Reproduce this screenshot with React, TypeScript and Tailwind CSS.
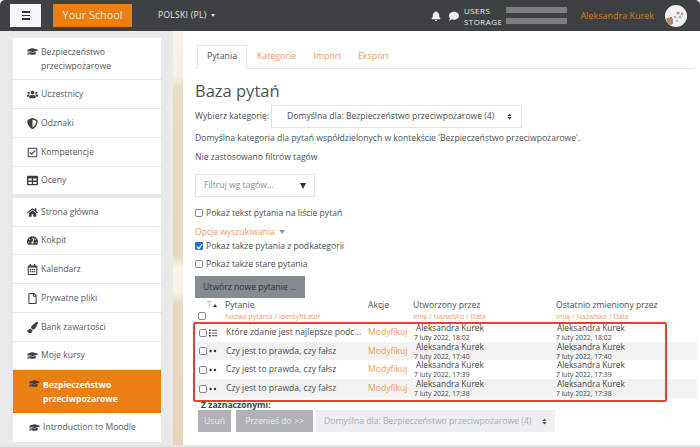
import { FaBell, FaComment, FaUsers, FaShieldAlt, FaRegCheckSquare, FaTable, FaHome, FaTachometerAlt, FaRegCalendarAlt, FaRegFile, FaPaintBrush, FaGraduationCap, FaSort } from 'react-icons/fa';
import type { ReactNode } from 'react';

type Item = { label: ReactNode; icon: ReactNode; h: string };
const ic = 'w-[11px] h-[11px] text-[#3a3f42] shrink-0';

const top: Item[] = [
  { label: <>Bezpieczeństwo<br />przeciwpożarowe</>, icon: <FaGraduationCap className={ic} />, h: 'h-[42px]' },
  { label: 'Uczestnicy', icon: <FaUsers className={ic} />, h: 'h-[29px]' },
  { label: 'Odznaki', icon: <FaShieldAlt className={ic} />, h: 'h-[29px]' },
  { label: 'Kompetencje', icon: <FaRegCheckSquare className={ic} />, h: 'h-[29px]' },
  { label: 'Oceny', icon: <FaTable className={ic} />, h: 'h-[28px]' },
];

const bottom: Item[] = [
  { label: 'Strona główna', icon: <FaHome className={ic} />, h: 'h-[29px]' },
  { label: 'Kokpit', icon: <FaTachometerAlt className={ic} />, h: 'h-[28px]' },
  { label: 'Kalendarz', icon: <FaRegCalendarAlt className={ic} />, h: 'h-[29px]' },
  { label: 'Prywatne pliki', icon: <FaRegFile className={ic} />, h: 'h-[29px]' },
  { label: 'Bank zawartości', icon: <FaPaintBrush className={ic} />, h: 'h-[29px]' },
  { label: 'Moje kursy', icon: <FaGraduationCap className={ic} />, h: 'h-[28px]' },
];

const rows = [
  { name: 'Które zdanie jest najlepsze podc...', multi: true, date: '7 luty 2022, 18:02', bg: '', h: 'h-[19px]' },
  { name: 'Czy jest to prawda, czy fałsz', multi: false, date: '7 luty 2022, 17:40', bg: 'bg-[#f2f2f2]', h: 'h-[18px]' },
  { name: 'Czy jest to prawda, czy fałsz', multi: false, date: '7 luty 2022, 17:39', bg: '', h: 'h-[19px]' },
  { name: 'Czy jest to prawda, czy fałsz', multi: false, date: '7 luty 2022, 17:38', bg: 'bg-[#f2f2f2]', h: 'h-[19px]' },
];

function NavRow({ item }: { item: Item }) {
  return (
    <div className={`${item.h} flex items-center gap-[3px] pl-[13px] border-b border-[#e8e8e8] text-[#555b60]`}>
      {typeof item.label === 'string' ? (
        <>
          <span className="w-[12px] flex justify-center">{item.icon}</span>
          <span>{item.label}</span>
        </>
      ) : (
        <>
          <span className="w-[12px] flex justify-center self-start mt-[8px]">{item.icon}</span>
          <span className="leading-[14px]">{item.label}</span>
        </>
      )}
    </div>
  );
}

const Box = () => <span className="w-[8px] h-[8px] border border-[#8a8a8a] rounded-[2px] bg-white shrink-0" />;

function TypeIcon({ multi }: { multi: boolean }) {
  if (multi) {
    return (
      <svg viewBox="0 0 10 10" className="w-[8px] h-[8px] fill-[#333]">
        <rect x="0" y="0.5" width="2" height="2" />
        <rect x="0" y="4" width="2" height="2" />
        <rect x="0" y="7.5" width="2" height="2" />
        <rect x="3.5" y="1" width="6.5" height="1" />
        <rect x="3.5" y="4.5" width="6.5" height="1" />
        <rect x="3.5" y="8" width="6.5" height="1" />
      </svg>
    );
  }
  return (
    <svg viewBox="0 0 10 10" className="w-[8px] h-[8px] fill-[#333]">
      <circle cx="2" cy="5" r="1.5" />
      <circle cx="7.5" cy="5" r="1.5" />
    </svg>
  );
}

function Avatar() {
  return (
    <svg viewBox="0 0 22 22" className="ml-[11px] mr-[13px] w-[22px] h-[22px]">
      <circle cx="11" cy="11" r="11" fill="#f4f2f0" />
      <path d="M1 14c2-2 5-2 7 0v5l-3 1c-2-1-3-3-4-6z" fill="#b98a68" />
      <circle cx="13" cy="8" r="1.6" fill="#9a9a9a" />
      <circle cx="17" cy="9" r="1.4" fill="#a8a8a8" />
      <circle cx="15" cy="12" r="1.6" fill="#b5b5b5" />
      <circle cx="10" cy="12" r="1.2" fill="#a8a8a8" />
      <circle cx="12" cy="16" r="1.4" fill="#bdbdbd" />
      <circle cx="6" cy="13" r="1.1" fill="#d8643c" />
    </svg>
  );
}

export default function App() {
  return (
    <div className="w-[700px] h-[447px] overflow-hidden bg-white relative text-[8.6px] text-[#4a4f53] font-['Open_Sans',sans-serif]">
      {/* header */}
      <div className="h-[31px] bg-[#3d4142] rounded-t-[5px] flex items-center">
        <div className="ml-[10px] w-[31px] h-[23px] bg-[#f7f8f9] flex flex-col items-center justify-center gap-[2px]">
          <span className="w-[8px] h-[1.5px] bg-[#333]" />
          <span className="w-[8px] h-[1.5px] bg-[#333]" />
          <span className="w-[8px] h-[1.5px] bg-[#333]" />
        </div>
        <div className="ml-[12px] w-[79px] h-[23px] bg-[#ec7f13] text-[#fbe6d0] text-[10.8px] flex items-center justify-center">Your School</div>
        <div className="ml-[26px] text-[#e3e5e6] text-[8.5px] tracking-[0.3px] flex items-center gap-[5px]">
          POLSKI (PL)
          <span className="w-0 h-0 border-x-[2.5px] border-x-transparent border-t-[3px] border-t-[#e3e5e6]" />
        </div>
        <div className="ml-auto flex items-center text-[#eceeef]">
          <FaBell className="w-[10px] h-[10px]" />
          <FaComment className="ml-[8px] w-[10px] h-[10px]" />
          <div className="ml-[5px] text-[8px] tracking-[0.45px] leading-[11px]">
            <div>USERS</div>
            <div>STORAGE</div>
          </div>
          <div className="ml-[4px] flex flex-col gap-[5px]">
            <div className="w-[61px] h-[6px] bg-[#7b7d7e] border-l border-l-[#3f9a4e]" />
            <div className="w-[61px] h-[6px] bg-[#7b7d7e]" />
          </div>
          <span className="ml-[13px] text-[#d9790f] text-[9px]">Aleksandra Kurek</span>
          <Avatar />
        </div>
      </div>

      <div className="flex h-[414px]">
        {/* sidebar */}
        <div className="w-[173px] bg-[#e9e9e9] pl-[13px] pt-[7px] shrink-0">
          <div className="w-[148px] bg-white">
            {top.map((t, i) => <NavRow key={i} item={t} />)}
          </div>
          <div className="w-[148px] bg-white mt-[3px]">
            {bottom.map((t, i) => <NavRow key={i} item={t} />)}
            <div className="h-[43px] bg-[#ec7f13] flex items-center gap-[3px] pl-[16px]">
              <span className="self-start mt-[8px]"><FaGraduationCap className={ic} /></span>
              <span className="font-bold text-white leading-[14px]">Bezpieczeństwo<br />przeciwpożarowe</span>
            </div>
            <div className="h-[29px] flex items-center gap-[3px] pl-[16px] text-[#555b60]">
              <FaGraduationCap className={ic} />
              <span>Introduction to Moodle</span>
            </div>
          </div>
        </div>
        <div className="w-[10px] bg-[linear-gradient(to_bottom,#faf3e9_0%,#f8efe3_11%,#e8dac3_14%,#e6d7bf_54%,#fbf4e9_57%,#fbf2e6_63%,#e7d7be_66%,#e6d5bb_100%)] shrink-0" />

        {/* main */}
        <div className="relative w-[515px] bg-white pl-[12px] pt-[14px] rounded-br-[5px]">
          <div className="flex h-[24px] border-b border-[#e5e5e5] text-[8.8px] text-[#f29a5f] mr-[4px]">
            <div className="ml-[2px] w-[50px] h-[24px] border border-[#e5e5e5] border-b-white bg-white flex items-center justify-center text-[#4a4f53]">Pytania</div>
            <div className="w-[59px] flex items-center justify-center">Kategorie</div>
            <div className="w-[45px] flex items-center justify-center -ml-[1px]">Import</div>
            <div className="w-[45px] flex items-center justify-center ml-[1px]">Eksport</div>
          </div>

          <h1 className="text-[16.5px] leading-[22px] mt-[11px] text-[#4d5256]">Baza pytań</h1>

          <div className="flex items-center mt-[3px] h-[23px]">
            <span>Wybierz kategorię:</span>
            <div className="ml-[2px] w-[251px] h-[23px] border border-[#dfe3e8] flex items-center pl-[15px] pr-[8px] justify-between">
              <span>Domyślna dla: Bezpieczeństwo przeciwpożarowe (4)</span>
              <FaSort className="w-[7px] h-[7px] text-[#444]" />
            </div>
          </div>

          <div className="mt-[3px] leading-[14px]">Domyślna kategoria dla pytań współdzielonych w kontekście 'Bezpieczeństwo przeciwpożarowe'.</div>
          <div className="mt-[5px] leading-[14px]">Nie zastosowano filtrów tagów</div>

          <div className="mt-[10px] w-[120px] h-[23px] border border-[#dfe3e8] flex items-center justify-between pl-[8px] pr-[8px] text-[#8a8f94]">
            <span>Filtruj wg tagów...</span>
            <span className="w-0 h-0 border-x-[3.5px] border-x-transparent border-t-[6px] border-t-[#333]" />
          </div>

          <label className="mt-[10px] h-[12px] flex items-center gap-[3px]"><Box />Pokaż tekst pytania na liście pytań</label>
          <div className="mt-[7px] h-[12px] flex items-center gap-[4px] text-[#f29a5f]">
            Opcje wyszukiwania
            <span className="w-0 h-0 border-x-[3.5px] border-x-transparent border-t-[4px] border-t-[#999]" />
          </div>
          <label className="mt-[2px] h-[12px] flex items-center gap-[3px]">
            <span className="w-[8px] h-[8px] bg-[#1a73e8] rounded-[1px] flex items-center justify-center shrink-0">
              <svg viewBox="0 0 10 10" className="w-[7px] h-[7px] stroke-white fill-none stroke-2"><path d="M1.5 5.5 4 8l4.5-6" /></svg>
            </span>
            Pokaż także pytania z podkategorii
          </label>
          <label className="mt-[6px] h-[12px] flex items-center gap-[3px]"><Box />Pokaż także stare pytania</label>

          <div className="mt-[6px] w-[110px] h-[22px] bg-[#868b91] text-[#2f3234] flex items-center justify-center">Utwórz nowe pytanie ...</div>

          {/* table */}
          <div className="mt-[1px] w-[502px]">
            <div className="h-[24px] flex">
              <div className="w-[30px]">
                <div className="h-[12px] pl-[12px] flex items-center gap-[1px] text-[#f29a5f]">T<span className="w-0 h-0 border-x-[2.5px] border-x-transparent border-b-[3px] border-b-[#333]" /></div>
                <div className="mt-[1px] pl-[3px]"><span className="block w-[8px] h-[8px] border border-[#8a8a8a] rounded-[2px]" /></div>
              </div>
              <div className="w-[143px]">
                <div className="h-[12px] leading-[12px]">Pytanie</div>
                <div className="mt-[1px] text-[7px] leading-[9px] text-[#f29a5f]">Nazwa pytania / Identyfikator</div>
              </div>
              <div className="w-[45px] leading-[12px]">Akcje</div>
              <div className="w-[143px]">
                <div className="h-[12px] leading-[12px]">Utworzony przez</div>
                <div className="mt-[1px] text-[7px] leading-[9px] text-[#f29a5f]">Imię / Nazwisko / Data</div>
              </div>
              <div>
                <div className="h-[12px] leading-[12px]">Ostatnio zmieniony przez</div>
                <div className="mt-[1px] text-[7px] leading-[9px] text-[#f29a5f]">Imię / Nazwisko / Data</div>
              </div>
            </div>
            {rows.map((r, i) => (
              <div key={i} className={`${r.h} ml-[2px] flex items-center ${r.bg}`}>
                <div className="w-[29px] flex items-center gap-[2px] pl-[2px]">
                  <Box />
                  <TypeIcon multi={r.multi} />
                </div>
                <div className="w-[142px] whitespace-nowrap">{r.name}</div>
                <div className="w-[45px] text-[#f29a5f]">Modyfikuj</div>
                <div className="w-[143px] pl-[1px] text-[#3f4346]">
                  <div className="pl-[2px] text-[8.3px] leading-[10px]">Aleksandra Kurek</div>
                  <div className="text-[6.8px] leading-[9px]">{r.date}</div>
                </div>
                <div className="text-[#3f4346]">
                  <div className="pl-[1px] text-[8.3px] leading-[10px]">Aleksandra Kurek</div>
                  <div className="text-[6.8px] leading-[9px]">{r.date}</div>
                </div>
              </div>
            ))}
          </div>

          <div className="mt-[3px] pl-[6px] font-bold leading-[9px] text-[#3f4346]">Z zaznaczonymi:</div>
          <div className="ml-[3px] flex h-[22px]">
            <div className="w-[33px] bg-[#aeb2b6] text-[#e9eaeb] flex items-center justify-center">Usuń</div>
            <div className="ml-[5px] w-[77px] bg-[#aeb2b6] text-[#e9eaeb] flex items-center justify-center">Przenieś do &gt;&gt;</div>
            <div className="ml-[3px] w-[239px] bg-[#eceef0] text-[#a9adb1] flex items-center justify-between pl-[8px] pr-[7px]">
              Domyślna dla: Bezpieczeństwo przeciwpożarowe (4)
              <FaSort className="w-[7px] h-[7px] text-[#555]" />
            </div>
          </div>

          {/* red highlight drawn over the table */}
          <div className="absolute left-[10px] top-[291px] w-[474px] h-[80px] border-2 border-[#e8402c] rounded-[2px] pointer-events-none" />
        </div>
        <div className="w-[2px] bg-white" />
      </div>
      <div className="h-[2px] bg-[#e4e4e4]" />
    </div>
  );
}
